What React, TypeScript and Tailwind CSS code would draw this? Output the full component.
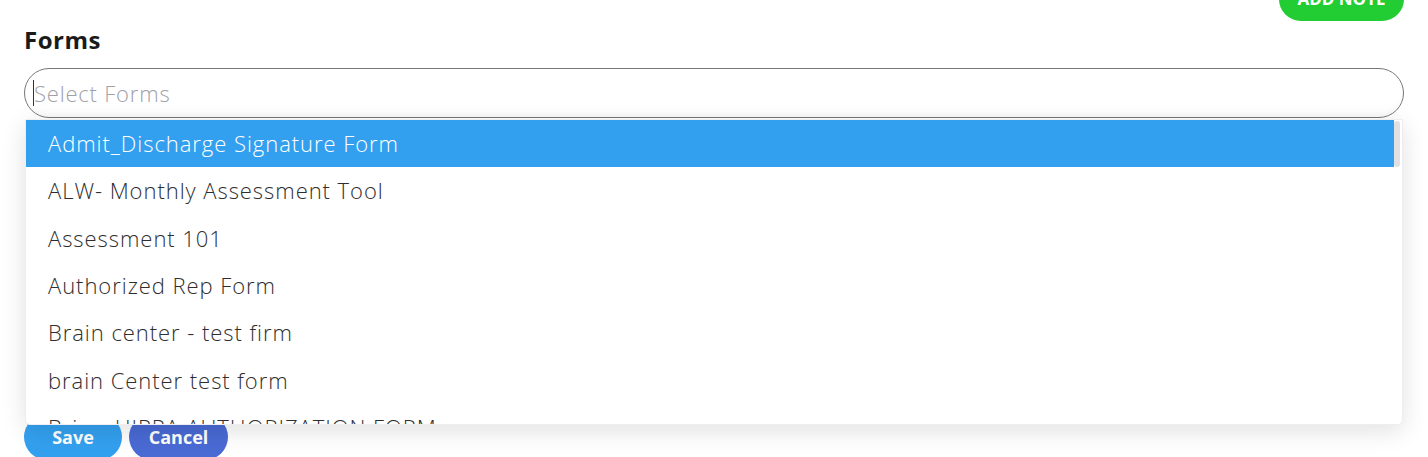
import React from "react";

const items = [
  "Admit_Discharge Signature Form",
  "ALW- Monthly Assessment Tool",
  "Assessment 101",
  "Authorized Rep Form",
  "Brain center - test firm",
  "brain Center test form",
  "Brian_HIPPA AUTHORIZATION FORM",
];

export default function App() {
  return (
    <div
      className="relative w-[1428px] h-[457px] overflow-hidden bg-white px-[24px]"
      style={{ fontFamily: '"Open Sans", "Noto Sans", sans-serif' }}
    >
      <div className="flex h-[21px] justify-end">
        <button className="-mt-[23px] h-[44px] w-[125px] rounded-full bg-[#22cc33] text-[17px] font-bold text-white">
          ADD NOTE
        </button>
      </div>
      <div className="mt-[3px] text-[24px] font-bold leading-[32px] tracking-[0.5px] text-[#1a1a1a]">Forms</div>
      <div className="relative mt-[12px]">
        <div className="flex h-[50px] items-center rounded-full border border-[#777] bg-white pl-[8px] shadow-[inset_0_-6px_8px_-6px_rgba(0,0,0,0.06)]">
          <span className="h-[26px] w-[1px] bg-[#333]" />
          <span className="text-[22px] font-light tracking-[0.8px] text-[#a0a0a8]">Select Forms</span>
        </div>
        <div className="absolute left-[1px] top-[51px] z-10 flex h-[306px] w-[1378px] overflow-hidden rounded-b-[5px] border border-[#eceef2] bg-white shadow-[0_6px_24px_rgba(0,0,0,0.12)]">
          <div className="flex-1">
            {items.map((t, i) => (
              <div
                key={t}
                className={`flex h-[47.3px] items-center pl-[22px] text-[22px] font-light tracking-[0.95px] ${
                  i === 0 ? "bg-[#33a0ef] text-white" : "text-[#2e2e2e]"
                }`}
              >
                {t}
              </div>
            ))}
          </div>
          <div className="w-[8px] pt-[1px]">
            <div className="h-[46px] w-[6px] rounded-full bg-[#e0e0e0]" />
          </div>
        </div>
      </div>
      <div className="mt-[296px] flex gap-[7px]">
        <button className="h-[46px] w-[98px] rounded-full bg-[#33a0ef] text-[18px] font-bold text-white">
          Save
        </button>
        <button className="h-[46px] w-[99px] rounded-full bg-[#4a6ad4] text-[18px] font-bold text-white">
          Cancel
        </button>
      </div>
    </div>
  );
}
